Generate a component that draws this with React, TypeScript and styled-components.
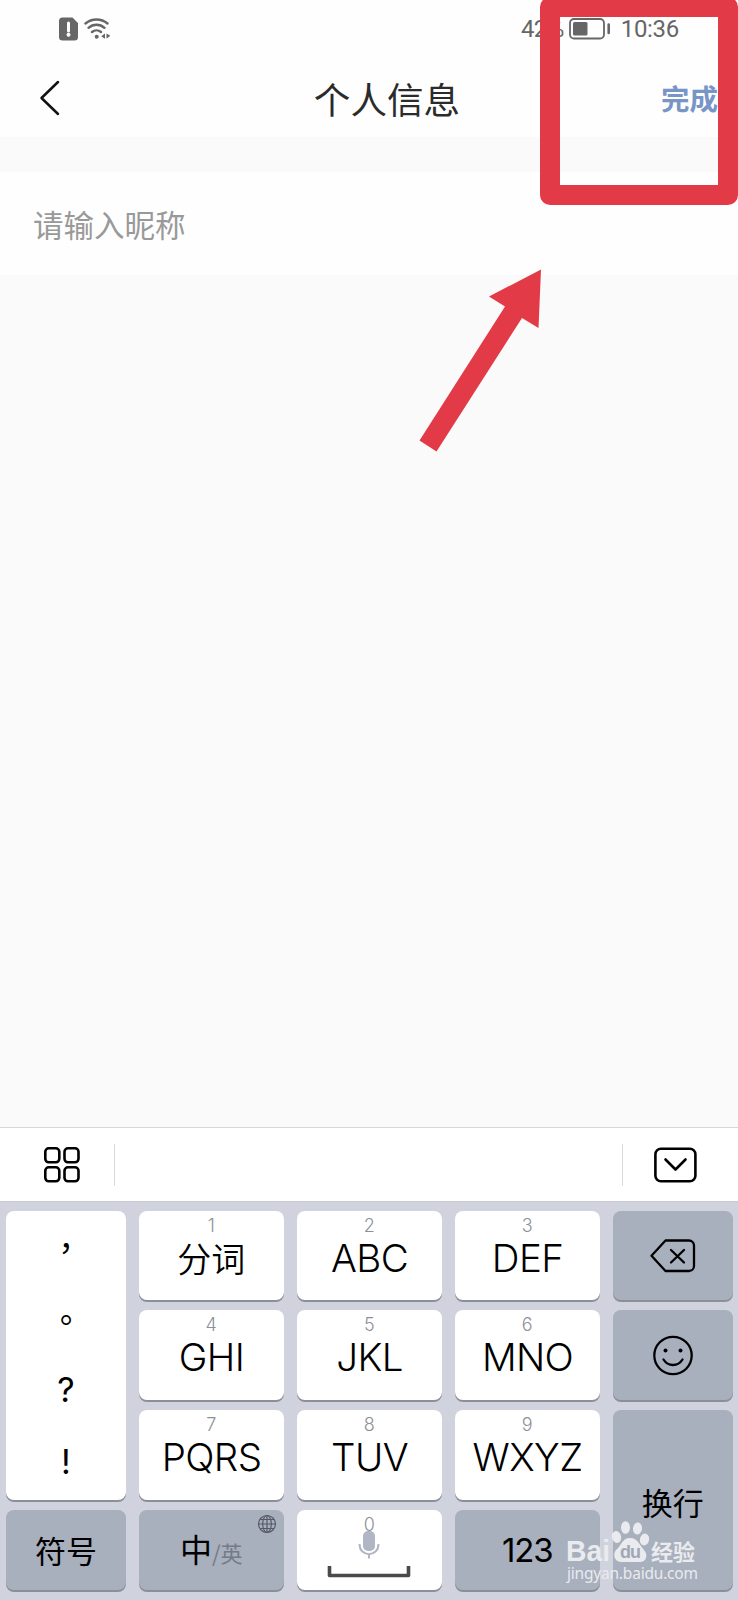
import React from "react";
import styled, { createGlobalStyle } from "styled-components";

const cjk = '"Noto Sans CJK SC", "Noto Sans", sans-serif';

const GlobalStyle = createGlobalStyle`
  * { box-sizing: border-box; }
  body { margin: 0; background: #fafafa; font-family: ${cjk}; }
`;

const Screen = styled.div`
  position: relative;
  width: 738px;
  height: 1600px;
  overflow: hidden;
  display: flex;
  flex-direction: column;
  background: #fafafa;
`;

const StatusBar = styled.div`
  height: 57px;
  padding: 0 59px 0 58px;
  display: flex;
  justify-content: space-between;
  align-items: center;
  background: #fefefe;
  color: #666;
  font: 400 24px/28px Roboto, sans-serif;
`;

const StatusGroup = styled.div<{ $gap: number }>`
  display: flex;
  align-items: center;
  gap: ${(p) => p.$gap}px;
`;

const Percent = styled.span`
  letter-spacing: -0.6px;
`;

const Clock = styled.span`
  margin-left: 5px;
  letter-spacing: -0.3px;
`;

const Header = styled.header`
  height: 80px;
  padding: 0 20px 0 38px;
  display: grid;
  grid-template-columns: 1fr auto 1fr;
  align-items: center;
  background: #fefefe;
`;

const BackIcon = styled.svg`
  margin-top: 1px;
`;

const Title = styled.h1`
  margin: 3px -18px 0 0;
  font: 400 36.6px/50px ${cjk};
  color: #2b2b2b;
`;

const Done = styled.span`
  justify-self: end;
  margin-top: 2px;
  font: 700 28.5px/40px ${cjk};
  color: #7795c6;
`;

const NameField = styled.div`
  margin-top: 35px;
  height: 103px;
  padding: 0 33px;
  display: flex;
  align-items: center;
  background: #fefefe;
  color: #999;
  font: 400 30.5px/44px ${cjk};
`;

const Blank = styled.main`
  flex: 1;
`;

const Toolbar = styled.div`
  height: 74px;
  padding: 0 41px 0 43px;
  display: flex;
  align-items: center;
  background: #fff;
  border-top: 1px solid #d6d6d8;
`;

const Divider = styled.i<{ $ml?: string; $mr?: string }>`
  width: 1px;
  height: 42px;
  margin-left: ${(p) => p.$ml ?? "0"};
  margin-right: ${(p) => p.$mr ?? "0"};
  background: #d9dadd;
`;

const Keyboard = styled.div`
  height: 399px;
  padding: 10px 5px 8px 6px;
  display: grid;
  grid-template-columns: 120px repeat(3, 145.5px) 120.5px;
  grid-template-rows: 91px 92px 92px 82px;
  column-gap: 12.5px;
  row-gap: 8px;
  background: #d0d2dd;
  box-shadow: inset 0 1px 0 #c8cad1;
`;

const Key = styled.div<{ $dark?: boolean; $span?: number }>`
  grid-row: span ${(p) => p.$span ?? 1};
  margin-bottom: 2px;
  border-radius: 8px;
  display: flex;
  flex-direction: column;
  align-items: center;
  justify-content: ${(p) => (p.$dark ? "center" : "flex-start")};
  background: ${(p) => (p.$dark ? "#a8afbd" : "#fff")};
  box-shadow: 0 2px 0 #8c8f98;
  color: #000;
`;

const Digit = styled.span`
  margin-top: 5px;
  font: 300 18px/20px Inter, sans-serif;
  color: #8e9097;
`;

const Letters = styled.span<{ $spacing: number }>`
  margin-top: 2px;
  font: 300 38.5px/40px Inter, sans-serif;
  letter-spacing: ${(p) => p.$spacing}px;
  margin-right: ${(p) => p.$spacing}px;
`;

const Segment = styled.span`
  margin-top: 2px;
  font: 350 34px/40px ${cjk};
`;

const PunctuationKey = styled(Key)`
  justify-content: flex-start;
`;

const Mark = styled.span<{ $wide?: boolean }>`
  height: 71.5px;
  font: 400 ${(p) => (p.$wide ? "32px" : "34px")}/71.5px
    ${(p) => (p.$wide ? '"Noto Sans CJK TC"' : "Inter")}, sans-serif;
`;

const Word = styled.span<{ $top?: number }>`
  margin-top: ${(p) => p.$top ?? 0}px;
  font: 400 31px/44px ${cjk};
`;

const LanguageKey = styled(Key)`
  position: relative;
`;

const Language = styled.div`
  display: flex;
  align-items: baseline;
  font: 400 32px/44px ${cjk};
`;

const LanguageAlt = styled.span`
  font-size: 22px;
  color: #747b87;
`;

const Globe = styled.svg`
  position: absolute;
  top: 4px;
  right: 7px;
`;

const Numbers = styled.span`
  font: 400 33px/44px Inter, sans-serif;
  letter-spacing: -1.2px;
`;

const SpaceIcon = styled.svg`
  margin-top: -5px;
`;

const Overlay = styled.svg`
  position: absolute;
  inset: 0;
  pointer-events: none;
`;

const HighlightBox = styled.div`
  position: absolute;
  left: 539.5px;
  top: -3px;
  width: 198.5px;
  height: 208px;
  border: 20px solid #e23a47;
  border-radius: 10px;
`;

const letterKeys: { digit: string; label: string; spacing: number }[][] = [
  [
    { digit: "2", label: "ABC", spacing: -0.6 },
    { digit: "3", label: "DEF", spacing: -0.6 },
  ],
  [
    { digit: "4", label: "GHI", spacing: -0.6 },
    { digit: "5", label: "JKL", spacing: -0.6 },
    { digit: "6", label: "MNO", spacing: -0.6 },
  ],
  [
    { digit: "7", label: "PQRS", spacing: -0.6 },
    { digit: "8", label: "TUV", spacing: -0.6 },
    { digit: "9", label: "WXYZ", spacing: -0.6 },
  ],
];

const LetterRow = ({ row }: { row: number }) => (
  <>
    {letterKeys[row].map((k) => (
      <Key key={k.digit}>
        <Digit>{k.digit}</Digit>
        <Letters $spacing={k.spacing}>{k.label}</Letters>
      </Key>
    ))}
  </>
);

const SimIcon = () => (
  <svg width="21" height="24" viewBox="0 0 21 24">
    <path d="M4 .5h10.5L20 6v14a3.5 3.5 0 0 1-3.500 3.500H4.500A3.500 3.500 0 0 1 1 20V4A3.500 3.500 0 0 1 4 .5Z" fill="#666" />
    <path d="M10.500 6v8" stroke="#fff" strokeWidth="3" strokeLinecap="round" />
    <circle cx="10.500" cy="17.800" r="2" fill="#fff" />
  </svg>
);

const WifiIcon = () => (
  <svg width="27" height="24" viewBox="0 0 27 24" fill="none" stroke="#666" strokeWidth="2.400" strokeLinecap="round">
    <path d="M1.500 6.500a17 17 0 0 1 22 0M4.500 10.800a12 12 0 0 1 16 0M8 15a7 7 0 0 1 9 0" />
    <circle cx="12.700" cy="19.700" r="2" fill="#666" stroke="none" />
    <path d="m21 16.500-3.800 2.700 3.800 2.500ZM22.500 16.500l3.800 2.200-3.800 3Z" fill="#666" stroke="none" />
  </svg>
);

const BatteryIcon = () => (
  <svg width="42" height="22" viewBox="0 0 42 22" fill="none">
    <rect x="1" y="1" width="34" height="19.500" rx="4" stroke="#666" strokeWidth="1.800" />
    <rect x="4" y="4" width="14.500" height="13.500" rx="1.500" fill="#666" />
    <path d="M39.700 6.500v8.500" stroke="#666" strokeWidth="2.600" strokeLinecap="round" />
  </svg>
);

export default function App() {
  return (
    <Screen>
      <GlobalStyle />
      <StatusBar>
        <StatusGroup $gap={5}>
          <SimIcon />
          <WifiIcon />
        </StatusGroup>
        <StatusGroup $gap={5}>
          <Percent>42%</Percent>
          <BatteryIcon />
          <Clock>10:36</Clock>
        </StatusGroup>
      </StatusBar>
      <Header>
        <BackIcon width="24" height="38" viewBox="0 0 24 38" fill="none" stroke="#111" strokeWidth="2.500" strokeLinecap="round" strokeLinejoin="round">
          <path d="M20 3 3.500 19 20 35" />
        </BackIcon>
        <Title>个人信息</Title>
        <Done>完成</Done>
      </Header>
      <NameField>请输入昵称</NameField>
      <Blank />
      <Toolbar>
        <svg width="38" height="38" viewBox="0 0 38 38" fill="none" stroke="#000" strokeWidth="2.600">
          <rect x="2.300" y="2.300" width="14" height="14" rx="3.500" />
          <rect x="21.500" y="2.300" width="14" height="14" rx="3.500" />
          <rect x="2.300" y="21.300" width="14" height="14" rx="3.500" />
          <rect x="21.500" y="21.300" width="14" height="14" rx="3.500" />
        </svg>
        <Divider $ml="33px" />
        <Divider $ml="auto" $mr="31px" />
        <svg width="43" height="36" viewBox="0 0 43 36" fill="none" stroke="#000" strokeWidth="2.600" strokeLinecap="round" strokeLinejoin="round">
          <rect x="1.400" y="1.700" width="40" height="32.500" rx="5.500" />
          <path d="m11.500 12.500 10 10 10-10" />
        </svg>
      </Toolbar>
      <Keyboard>
        <PunctuationKey $span={3}>
          <Mark $wide lang="zh-TW">，</Mark>
          <Mark $wide lang="zh-TW">。</Mark>
          <Mark>?</Mark>
          <Mark>!</Mark>
        </PunctuationKey>
        <Key>
          <Digit>1</Digit>
          <Segment>分词</Segment>
        </Key>
        <LetterRow row={0} />
        <Key $dark>
          <svg width="46" height="36" viewBox="0 0 46 36" fill="none" stroke="#000" strokeWidth="2.300" strokeLinecap="round" strokeLinejoin="round">
            <path d="M15.500 2.500H39a5 5 0 0 1 5 5v20.500a5 5 0 0 1-5 5H15.500L1.500 17.800Z" />
            <path d="m21 12 13 12.500M34 12 21 24.500" />
          </svg>
        </Key>
        <LetterRow row={1} />
        <Key $dark>
          <svg width="42" height="42" viewBox="0 0 42 42" fill="none" stroke="#000" strokeWidth="2.300" strokeLinecap="round">
            <circle cx="21" cy="21.500" r="18.700" />
            <path d="M11.500 25.500c4.500 7.300 14.500 7.300 19 0" />
            <circle cx="13.500" cy="16.500" r="2" fill="#000" stroke="none" />
            <circle cx="28.500" cy="16.500" r="2" fill="#000" stroke="none" />
          </svg>
        </Key>
        <LetterRow row={2} />
        <Key $dark $span={2}>
          <Word $top={4}>换行</Word>
        </Key>
        <Key $dark>
          <Word>符号</Word>
        </Key>
        <LanguageKey $dark>
          <Language>
            中<LanguageAlt>/英</LanguageAlt>
          </Language>
          <Globe width="20" height="20" viewBox="0 0 20 20" fill="none" stroke="#555b66" strokeWidth="1.200">
            <circle cx="10" cy="10" r="8.500" />
            <ellipse cx="10" cy="10" rx="4.300" ry="8.500" />
            <path d="M10 1.500v17M1.500 10h17M3 5.500h14M3 14.500h14" />
          </Globe>
        </LanguageKey>
        <Key>
          <Digit>0</Digit>
          <SpaceIcon width="84" height="50" viewBox="0 0 84 50" fill="none">
            <rect x="36" y="1" width="12" height="20" rx="5" fill="#b0b6c3" />
            <path d="M32.500 14c0 13.500 19 13.500 19 0M42 24v4.500" stroke="#b0b6c3" strokeWidth="2" />
            <path d="M2.500 36v9.500h79V36" stroke="#4a4a4d" strokeWidth="3.600" strokeLinejoin="round" />
          </SpaceIcon>
        </Key>
        <Key $dark>
          <Numbers>123</Numbers>
        </Key>
      </Keyboard>
      <Overlay width="738" height="1600" viewBox="0 0 738 1600">
        <path d="M541 269.500 489 296.500 505 306.500 419.500 440.500 436.500 451.500 522 318 538.500 328Z" fill="#e23a47" />
        <g fill="#e9ebef">
          <text x="566" y="1561" fontFamily="Liberation Sans" fontWeight="700" fontSize="29" textLength="44" lengthAdjust="spacingAndGlyphs">Bai</text>
          <ellipse cx="616.500" cy="1537" rx="4.600" ry="6" transform="rotate(-15 616.500 1537)" />
          <ellipse cx="625.500" cy="1527.500" rx="4.500" ry="6.300" />
          <ellipse cx="637.500" cy="1528.500" rx="4.500" ry="6" transform="rotate(8 637.500 1528.500)" />
          <ellipse cx="644.500" cy="1539.500" rx="4.600" ry="6" transform="rotate(12 644.500 1539.500)" />
          <path d="M630 1538c-8 0-9 8-13 11-5 4-3 13 4 13h19c7 0 8-8 4-12-4-4-6-12-14-12Z" />
          <text x="651" y="1560" fontFamily="Noto Sans CJK SC" fontWeight="700" fontSize="22">经验</text>
          <text x="567" y="1579" fontFamily="Noto Sans" fontSize="15.500" textLength="131">jingyan.baidu.com</text>
        </g>
        <text x="620" y="1558" fontFamily="Liberation Sans" fontWeight="700" fontSize="18" textLength="21" fill="#a0a7b5">du</text>
      </Overlay>
      <HighlightBox />
    </Screen>
  );
}
